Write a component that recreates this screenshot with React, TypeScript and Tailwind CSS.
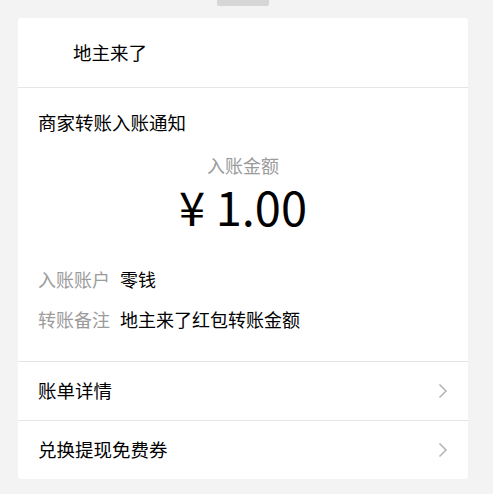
import React from "react";

const font = { fontFamily: '"Noto Sans CJK SC", "Noto Sans", sans-serif' };

function Chevron() {
  return (
    <svg width="10" height="16" viewBox="0 0 10 16" className="shrink-0">
      <path d="M1.5 1.5 L8 8 L1.5 14.5" fill="none" stroke="#b5b5b5" strokeWidth="1.6" />
    </svg>
  );
}

export default function App() {
  return (
    <div
      className="w-[493px] h-[494px] bg-[#f3f3f3] flex flex-col items-start pl-[18px] overflow-hidden text-black"
      style={font}
    >
      <div className="ml-[199px] w-[52px] h-[6px] bg-[#d6d6d6] rounded-b-[2px]" />
      <div className="mt-[12px] w-[450px] bg-white rounded-[3px] flex flex-col">
        <div className="h-[70px] flex items-center pl-[55px] text-[18.5px] border-b border-[#e5e5e5]">
          地主来了
        </div>
        <div className="h-[274px] flex flex-col px-5 pt-[22px] border-b border-[#e5e5e5]">
          <div className="text-[18.5px] leading-[24px]">商家转账入账通知</div>
          <div className="mt-[19px] text-center text-[18px] leading-[24px] text-[#9b9b9b]">入账金额</div>
          <div className="mt-[5px] text-center text-[47px] leading-[48px]">¥ 1.00</div>
          <div className="mt-[37px] flex text-[18px] leading-[24px]">
            <span className="w-[82px] text-[#9b9b9b]">入账账户</span>
            <span>零钱</span>
          </div>
          <div className="mt-[16px] flex text-[18px] leading-[24px]">
            <span className="w-[82px] text-[#9b9b9b]">转账备注</span>
            <span>地主来了红包转账金额</span>
          </div>
        </div>
        <div className="h-[59px] flex items-center justify-between pl-5 pr-[20px] text-[18.5px] border-b border-[#e5e5e5]">
          <span>账单详情</span>
          <Chevron />
        </div>
        <div className="h-[58px] flex items-center justify-between pl-5 pr-[20px] text-[18.5px]">
          <span>兑换提现免费券</span>
          <Chevron />
        </div>
      </div>
    </div>
  );
}
